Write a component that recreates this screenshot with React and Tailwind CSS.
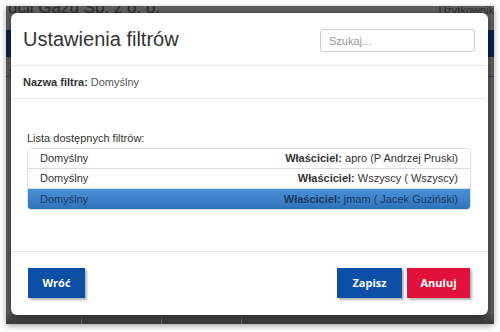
import React, { useState } from 'react';

const filters = [
  { name: 'Domyślny', login: 'apro', owner: '(P Andrzej Pruski)' },
  { name: 'Domyślny', login: 'Wszyscy', owner: '( Wszyscy)' },
  { name: 'Domyślny', login: 'jmam', owner: '( Jacek Guziński)' },
];

export default function App() {
  const [selected, setSelected] = useState(2);
  const [query, setQuery] = useState('');

  return (
    <div className="w-[500px] h-[332px] bg-white pt-[6px] pl-[6px] font-['Liberation_Sans',Arial,sans-serif]">
      <div className="relative w-[488px] h-[318px] bg-[#5e5e5e] overflow-hidden shadow-[0_2px_6px_rgba(0,0,0,0.35)] pt-[7px] pl-[5px]">
        {/* page behind the overlay */}
        <div className="absolute left-[2px] top-[-8px] text-[17px] leading-[20px] text-[#2a2a2a] whitespace-nowrap">
          ucji Gazu Sp. z o. o.
        </div>
        <div className="absolute right-0 top-[-3px] text-[11px] leading-[14px] text-[#2a2a2a] whitespace-nowrap">Użytkownik</div>
        <div className="absolute left-0 top-[24px] w-full h-[27px] bg-[#0c2548]" />
        <div className="absolute left-0 top-[70px] w-full h-px bg-[#3c3c6a]" />
        <div className="absolute left-[3px] top-[58px] text-[11px] text-[#2a2a2a]">S</div>
        <div className="absolute bottom-0 left-0 w-full h-[10px] bg-gradient-to-b from-[#555] to-[#3a3a3a]" />
        <div className="absolute bottom-0 left-[75px] w-px h-[10px] bg-[#666]" />
        <div className="absolute bottom-0 left-[155px] w-px h-[10px] bg-[#666]" />
        <div className="absolute bottom-0 left-[235px] w-px h-[10px] bg-[#666]" />

        {/* modal */}
        <div className="relative w-[477px] h-[302px] bg-white rounded-[6px] flex flex-col shadow-[0_3px_9px_rgba(0,0,0,0.5)]">
          <div className="h-[52px] flex items-start justify-between pl-[12px] pr-[13px]">
            <h4 className="mt-[15px] text-[20px] leading-[23px] text-[#333]">Ustawienia filtrów</h4>
            <input
              value={query}
              onChange={(e) => setQuery(e.target.value)}
              placeholder="Szukaj..."
              className="mt-[16px] w-[155px] h-[23px] border border-[#ccc] rounded-[3px] px-[8px] text-[11px] text-[#555] placeholder:text-[#999] outline-none"
            />
          </div>

          <div className="h-[34px] border-y border-[#e5e5e5] rounded-r-[4px] flex items-center pl-[12px] text-[11px] text-[#333]">
            <span className="font-bold">Nazwa filtra:</span>
            <span className="ml-[3px] text-[#555]">Domyślny</span>
          </div>

          <div className="flex-1 pl-[16px] pr-[17px] pt-[32px]">
            <div className="text-[11px] text-[#333] leading-[14px] mb-[3px]">Lista dostępnych filtrów:</div>
            <ul className="border border-[#ddd] rounded-[4px] overflow-hidden">
              {filters.map((f, i) => (
                <li
                  key={i}
                  onClick={() => setSelected(i)}
                  className={
                    i === selected
                      ? 'h-[20px] flex items-center justify-between px-[12px] text-[11px] text-[#1c3a63] bg-gradient-to-b from-[#4b91d6] to-[#2e72ba] cursor-pointer'
                      : 'h-[20px] flex items-center justify-between px-[12px] text-[11px] text-[#333] bg-white border-b border-[#ddd] cursor-pointer'
                  }
                >
                  <span>{f.name}</span>
                  <span>
                    <span className="font-bold">Właściciel:</span> {f.login} {f.owner}
                  </span>
                </li>
              ))}
            </ul>
          </div>

          <div className="h-[64px] border-t border-[#e5e5e5] flex items-start justify-between pt-[16px] pl-[17px] pr-[18px] font-['Open_Sans',sans-serif]">
            <button className="w-[57px] h-[30px] bg-[#0b4fa6] text-white text-[11px] font-bold shadow-[2px_2px_2px_rgba(0,0,0,0.3)]">
              Wróć
            </button>
            <div className="flex gap-[5px]">
              <button className="w-[65px] h-[30px] bg-[#0b4fa6] text-white text-[11px] font-bold shadow-[2px_2px_2px_rgba(0,0,0,0.3)]">
                Zapisz
              </button>
              <button className="w-[63px] h-[30px] bg-[#e0123c] text-white text-[11px] font-bold shadow-[2px_2px_2px_rgba(0,0,0,0.3)]">
                Anuluj
              </button>
            </div>
          </div>
        </div>
      </div>
    </div>
  );
}
